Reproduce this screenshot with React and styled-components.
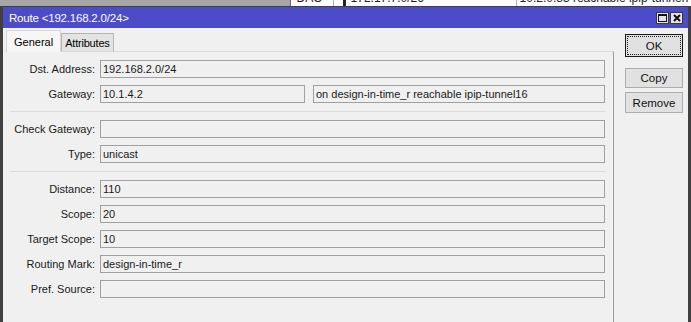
import React from "react";
import styled, { createGlobalStyle } from "styled-components";

const Global = createGlobalStyle`
  html, body { margin: 0; padding: 0; }
  body {
    width: 691px; height: 322px; overflow: hidden;
    background: #a6a6a6;
    font-family: "Liberation Sans", Arial, sans-serif;
    font-size: 11px; color: #000;
  }
`;

const Desktop = styled.div`
  width: 691px; height: 322px; overflow: hidden;
  display: flex; flex-direction: column;
`;

const BackTable = styled.div`
  height: 6px; display: flex; flex: none;
`;
const BackGray = styled.div`
  width: 305px; background: #a6a6a6;
`;
const BackRow = styled.div`
  flex: 1; display: flex; background: #fff; border-left: 1px solid #6a6a6a;
`;
const BackCell = styled.div`
  width: ${p => p.$w}px; height: 6px; overflow: hidden;
  border-right: ${p => (p.$sep ? "1px solid #b0b0b0" : "none")};
  padding-left: ${p => p.$pl || 4}px; box-sizing: border-box;
  display: flex; gap: 5px; flex: ${p => (p.$grow ? 1 : "none")};
  span { display: block; line-height: 14px; margin-top: -9px; font-size: 12px; white-space: nowrap; color: #222; }
`;
const Flag = styled.i`
  display: block; width: 3px; height: 6px; background: #222; flex: none;
`;

const Window = styled.div`
  flex: 1; display: flex; flex-direction: column;
  border: 3px solid #404040; border-top: 1px solid #404040; border-bottom: none;
  background: #f0f0f0;
`;
const TitleBar = styled.div`
  height: 21px; background: #4c4cc8; display: flex; align-items: center;
  padding: 0 5px 0 6px; flex: none;
`;
const Title = styled.div`
  flex: 1; color: #fff; font-size: 11.5px; letter-spacing: -0.2px;
`;
const Controls = styled.div`
  display: flex; gap: 1px;
`;
const CtrlBtn = styled.div`
  width: 13px; height: 12px; box-sizing: border-box;
  border: 1px solid #3a3a3a; background: #e4e4e4;
  display: flex; align-items: center; justify-content: center;
`;

const Body = styled.div`
  flex: 1; display: flex;
`;
const LeftCol = styled.div`
  width: 609px; display: flex; flex-direction: column; padding-left: 2px; padding-top: 2px;
`;
const Tabs = styled.div`
  display: flex; align-items: flex-end; padding-left: 1px; height: 21px;
`;
const Tab = styled.div`
  box-sizing: border-box;
  height: ${p => (p.$active ? 22 : 18)}px;
  padding: 0 ${p => (p.$active ? 7 : 3)}px;
  display: flex; align-items: center;
  background: ${p => (p.$active ? "#f6f6f6" : "#e3e3e3")};
  border: 1px solid ${p => (p.$active ? "#d8d8d8" : "#b4b4b4")};
  border-bottom: none;
  margin-bottom: ${p => (p.$active ? -1 : 0)}px;
  position: relative; z-index: ${p => (p.$active ? 1 : 0)};
  letter-spacing: ${p => (p.$active ? 0 : -0.2)}px;
`;
const Panel = styled.div`
  flex: 1; border-top: 1px solid #dadada; border-right: 1px solid #9c9c9c;
  display: flex; flex-direction: column; gap: 7px;
  padding: 8px 8px 0 0;
`;
const Row = styled.div`
  display: flex; align-items: center; height: 18px;
`;
const Label = styled.div`
  width: 90px; text-align: right; padding-right: 5px; color: #1a1a1a;
`;
const Field = styled.div`
  box-sizing: border-box; height: 18px;
  ${p => (p.$w ? `width: ${p.$w}px; flex: none;` : "flex: 1;")}
  border: 1px solid #a0a0a0; background: #f0f0f0;
  padding: 0 2px; display: flex; align-items: center;
  white-space: nowrap; overflow: hidden; color: #1a1a1a;
  margin-left: ${p => p.$ml || 0}px;
`;
const Sep = styled.div`
  height: 1px; background: #dcdcdc; margin: 1px 0 1px 5px;
`;

const RightCol = styled.div`
  flex: 1; display: flex; flex-direction: column; align-items: flex-start;
  padding: 6px 0 0 11px;
`;
const Button = styled.div`
  box-sizing: border-box; width: 58px; height: ${p => p.$h || 22}px;
  background: #e1e1e1; border: 1px solid ${p => (p.$default ? "#1a1a1a" : "#adadad")};
  display: flex; align-items: center; justify-content: center;
  margin-bottom: ${p => p.$mb || 3}px; font-size: 11.5px; color: #111;
  position: relative;
  &::after {
    content: ""; display: ${p => (p.$default ? "block" : "none")};
    position: absolute; inset: 1px; border: 1px dotted #222;
  }
`;

export default function App() {
  return (
    <>
      <Global />
      <Desktop>
        <BackTable>
          <BackGray />
          <BackRow>
            <BackCell $w={43} $sep $pl={6}><span>DAC</span></BackCell>
            <BackCell $w={178} $pl={9}><Flag /><span>172.17.7.0/26</span></BackCell>
            <BackCell $w={2} $sep $pl={0} />
            <BackCell $grow $pl={3}><span>10.2.0.83 reachable ipip-tunnel7</span></BackCell>
          </BackRow>
        </BackTable>
        <Window>
          <TitleBar>
            <Title>Route &lt;192.168.2.0/24&gt;</Title>
            <Controls>
              <CtrlBtn>
                <svg width="9" height="8" viewBox="0 0 9 8">
                  <rect x="0.5" y="0.5" width="8" height="7" fill="none" stroke="#111" />
                  <rect x="0" y="0" width="9" height="2" fill="#111" />
                </svg>
              </CtrlBtn>
              <CtrlBtn>
                <svg width="8" height="8" viewBox="0 0 8 8">
                  <path d="M1 1 L7 7 M7 1 L1 7" stroke="#111" strokeWidth="2" />
                </svg>
              </CtrlBtn>
            </Controls>
          </TitleBar>
          <Body>
            <LeftCol>
              <Tabs>
                <Tab $active>General</Tab>
                <Tab>Attributes</Tab>
              </Tabs>
              <Panel>
                <Row><Label>Dst. Address:</Label><Field>192.168.2.0/24</Field></Row>
                <Row>
                  <Label>Gateway:</Label>
                  <Field $w={205}>10.1.4.2</Field>
                  <Field $ml={8}>on design-in-time_r reachable ipip-tunnel16</Field>
                </Row>
                <Sep />
                <Row><Label>Check Gateway:</Label><Field /></Row>
                <Row><Label>Type:</Label><Field>unicast</Field></Row>
                <Sep />
                <Row><Label>Distance:</Label><Field>110</Field></Row>
                <Row><Label>Scope:</Label><Field>20</Field></Row>
                <Row><Label>Target Scope:</Label><Field>10</Field></Row>
                <Row><Label>Routing Mark:</Label><Field>design-in-time_r</Field></Row>
                <Row><Label>Pref. Source:</Label><Field /></Row>
              </Panel>
            </LeftCol>
            <RightCol>
              <Button $default $h={23} $mb={11}>OK</Button>
              <Button $h={20} $mb={4}>Copy</Button>
              <Button $h={21}>Remove</Button>
            </RightCol>
          </Body>
        </Window>
      </Desktop>
    </>
  );
}
